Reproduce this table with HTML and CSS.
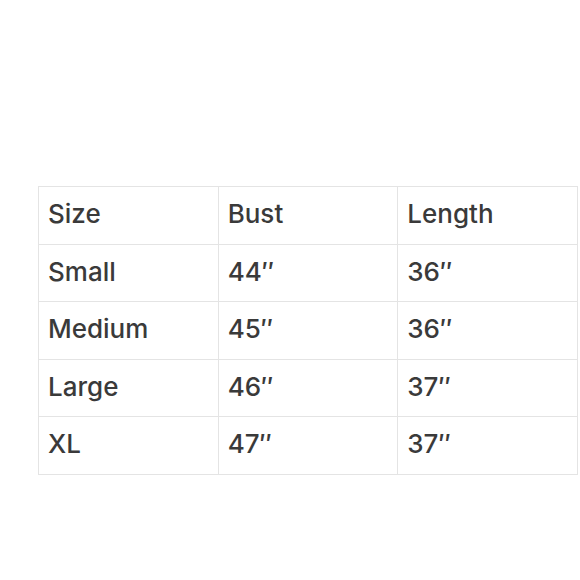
FILE: index.html
```html
<!DOCTYPE html>
<html>
<head>
<meta charset="utf-8">
<link rel="stylesheet" href="styles.css">
</head>
<body>
<div class="page">
<table class="sizes">
<tr><td>Size</td><td>Bust</td><td>Length</td></tr>
<tr><td>Small</td><td>44″</td><td>36″</td></tr>
<tr><td>Medium</td><td>45″</td><td>36″</td></tr>
<tr><td>Large</td><td>46″</td><td>37″</td></tr>
<tr><td>XL</td><td>47″</td><td>37″</td></tr>
</table>
</div>
</body>
</html>
```
FILE: styles.css
```css
html, body { margin: 0; padding: 0; background: #fff; }
.page { padding: 186px 0 0 38px; }
.sizes {
  border-collapse: collapse;
  table-layout: fixed;
  width: 540px;
  font-family: "Inter", "Liberation Sans", sans-serif;
  font-weight: 500;
  font-size: 26px;
  color: #3a3a3a;
}
.sizes td {
  border: 1.5px solid #e4e4e4;
  height: 57.5px;
  padding: 0 0 3px 9px;
  vertical-align: middle;
  box-sizing: border-box;
}
```
